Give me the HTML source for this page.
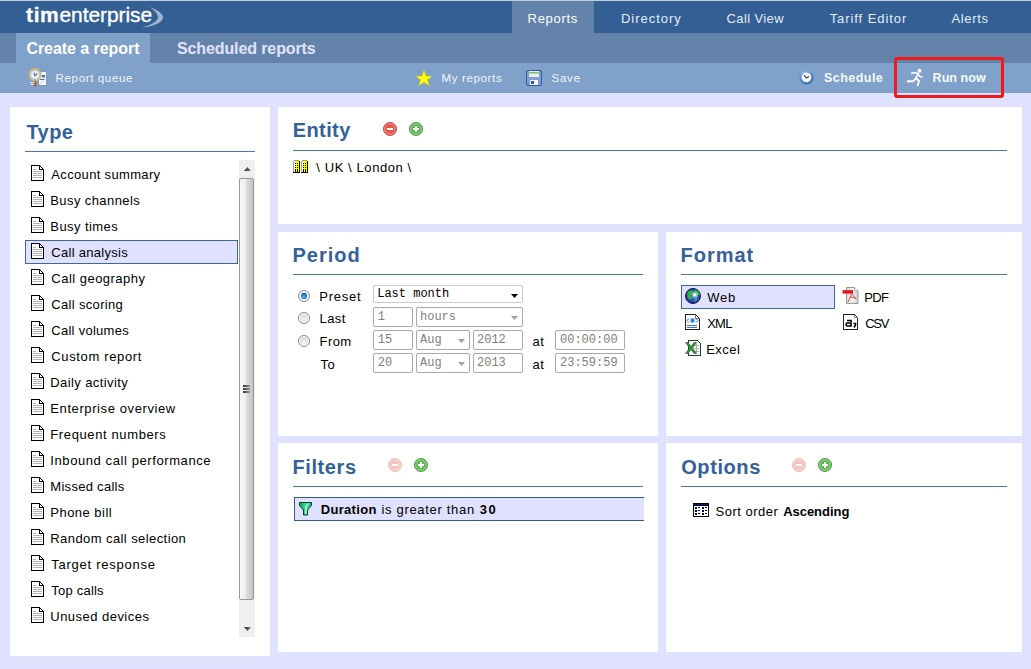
<!DOCTYPE html>
<html><head><meta charset="utf-8"><title>Create a report</title>
<style>
html,body{margin:0;padding:0;font-family:'Liberation Sans',sans-serif;width:1031px;height:669px;overflow:hidden;background:#e0e0ff;position:relative}
.a{position:absolute;box-sizing:content-box}
.t{position:absolute;white-space:pre}
.fld{border:1px solid #a9a9a9;border-radius:2px}
svg.a{display:block;overflow:visible}
</style></head><body>
<div class="a" style="left:0;top:0;width:1031px;height:1px;background:#c3cedb"></div><div class="a" style="left:0;top:1px;width:1031px;height:32px;background:#335f95"></div><div class="a" style="left:512px;top:1px;width:82px;height:32px;background:#6383ab"></div><div class="a" style="left:0;top:33px;width:1031px;height:30px;background:#6383ab"></div><div class="a" style="left:16px;top:33px;width:134px;height:30px;background:#7fa1ca"></div><div class="a" style="left:0;top:63px;width:1031px;height:30px;background:#7fa1ca"></div><svg class="a" style="left:138px;top:5px" width="28" height="26" viewBox="0 0 28 26"><path d="M12 2.2C20 5 25 9 25 12.3C25 17 17 21.5 4 22.6C13 20 20 16 20 12.5C20 9 17 5.5 12 2.2Z" fill="#a3b4d1"/></svg><div class="a" style="left:894px;top:57px;width:104px;height:35px;border:3px solid #f01818;border-radius:3px"></div><svg class="a" style="left:27px;top:67px" width="21" height="20" viewBox="0 0 21 20">
<rect x="11.5" y="4.5" width="8" height="14" fill="#f7f7f5" stroke="#7890b8" stroke-width="0.9"/>
<rect x="15" y="8" width="3" height="2.5" fill="#3a78d6"/><rect x="13" y="12" width="5" height="1" fill="#3a78d6"/>
<path d="M12 18L18 12" stroke="#b8b8b8" stroke-width="0.7"/>
<circle cx="8" cy="7.8" r="6" fill="#eef5fc" stroke="#d4b25e" stroke-width="1.5"/>
<circle cx="8" cy="7.8" r="4.6" fill="none" stroke="#7aa6e6" stroke-width="0.8"/>
<path d="M6.8 5.6L8 9L10.3 6.4" fill="none" stroke="#5a636e" stroke-width="1.1"/>
<path d="M8.5 14V18.5H6.5" fill="none" stroke="#cc4422" stroke-width="1.4"/>
<rect x="3.5" y="15" width="3" height="1" fill="#f4f4f4"/><rect x="3.5" y="17" width="3" height="1" fill="#f4f4f4"/>
</svg><svg class="a" style="left:415px;top:70px" width="18" height="17" viewBox="0 0 18 17"><path d="M9 0.5L11.1 6.2H17.2L12.3 9.8L14.2 15.8L9 12.1L3.8 15.8L5.7 9.8L0.8 6.2H6.9Z" fill="#ffff00" stroke="#e0d800" stroke-width="0.5"/></svg><svg class="a" style="left:526px;top:70px" width="16" height="16" viewBox="0 0 16 16">
<rect x="0.5" y="0.5" width="15" height="15" rx="1.5" fill="#7d9fd6" stroke="#2d5aa8"/>
<rect x="3" y="1" width="10" height="6" fill="#e8efe6"/><rect x="3" y="2" width="10" height="1.5" fill="#7cc168"/>
<rect x="4" y="10" width="8" height="5" fill="#f2f4f8"/><rect x="5" y="11" width="3" height="3" fill="#2d5aa8"/>
</svg><svg class="a" style="left:799px;top:70px" width="15" height="15" viewBox="0 0 15 15">
<defs><radialGradient id="sg" cx="0.4" cy="0.3" r="0.75"><stop offset="0" stop-color="#b8d4f4"/><stop offset="0.7" stop-color="#4a82c4"/><stop offset="1" stop-color="#2a5a98"/></radialGradient></defs>
<circle cx="7.5" cy="7.5" r="7" fill="url(#sg)"/>
<circle cx="7.5" cy="7.5" r="4.8" fill="#f8fbff"/>
<path d="M5 5.2L7.5 8L10 6.5" fill="none" stroke="#2a3a55" stroke-width="1.1"/>
</svg><svg class="a" style="left:905px;top:68px" width="20" height="19" viewBox="0 0 20 19">
<circle cx="14.5" cy="2.8" r="2" fill="#fff"/>
<path d="M6 5.5L9.5 4.5L13 5.5L11 10L14 13L12.5 18" fill="none" stroke="#fff" stroke-width="1.8" stroke-linejoin="round"/>
<path d="M13 5.5L14.5 8.5L17.5 9" fill="none" stroke="#fff" stroke-width="1.6" stroke-linejoin="round"/>
<path d="M11 10L8.5 13L2 13.5" fill="none" stroke="#fff" stroke-width="1.8" stroke-linejoin="round"/>
</svg><div class="a" style="left:10px;top:107px;width:260px;height:549px;background:#fff"></div><div class="a" style="left:278px;top:107px;width:744px;height:117px;background:#fff"></div><div class="a" style="left:278px;top:232px;width:380px;height:204px;background:#fff"></div><div class="a" style="left:666px;top:232px;width:356px;height:204px;background:#fff"></div><div class="a" style="left:278px;top:443px;width:380px;height:209px;background:#fff"></div><div class="a" style="left:666px;top:443px;width:356px;height:209px;background:#fff"></div><div class="a" style="left:25px;top:151px;width:230px;height:1px;background:#4f76a8"></div><div class="a" style="left:293px;top:150px;width:714px;height:1px;background:#4f76a8"></div><div class="a" style="left:293px;top:274px;width:350px;height:1px;background:#4f76a8"></div><div class="a" style="left:681px;top:274px;width:326px;height:1px;background:#4f76a8"></div><div class="a" style="left:293px;top:486px;width:350px;height:1px;background:#4f76a8"></div><div class="a" style="left:681px;top:486px;width:326px;height:1px;background:#4f76a8"></div><div class="a" style="left:239px;top:160px;width:16px;height:477px;background:#efefef"></div><svg class="a" style="left:244px;top:167px" width="7" height="4" viewBox="0 0 7 4"><defs><linearGradient id="ag" x1="0" x2="1"><stop offset="0" stop-color="#222"/><stop offset="1" stop-color="#888"/></linearGradient></defs><path d="M3.5 0L7 4H0Z" fill="url(#ag)"/></svg><svg class="a" style="left:244px;top:627px" width="7" height="4" viewBox="0 0 7 4"><path d="M0 0H7L3.5 4Z" fill="url(#ag)"/></svg><div class="a" style="left:239px;top:178px;width:13px;height:420px;border:1px solid #979797;border-radius:2px;background:linear-gradient(90deg,#f7f7f7 0%,#ececec 46%,#dcdcde 50%,#cacace 85%,#c2c2c6 100%)"></div><div class="a" style="left:243px;top:385px;width:7px;height:1.5px;background:linear-gradient(90deg,#333,#999)"></div><div class="a" style="left:243px;top:388px;width:7px;height:1.5px;background:linear-gradient(90deg,#333,#999)"></div><div class="a" style="left:243px;top:391px;width:7px;height:1.5px;background:linear-gradient(90deg,#333,#999)"></div><div class="a" style="left:25px;top:240px;width:211px;height:22px;border:1px solid #3c68a0;background:#e0e0ff"></div><svg class="a" style="left:31px;top:165px" width="13" height="16" viewBox="0 0 13 16" shape-rendering="crispEdges">
<path d="M0.5 0.5H8.5L12.5 4.5V15.5H0.5Z" fill="#fff" stroke="#000"/>
<path d="M8.5 0.5V4.5H12.5" fill="none" stroke="#000"/>
<rect x="2" y="4" width="3" height="1" fill="#b4b4b4"/>
<rect x="2" y="6" width="9" height="1" fill="#b4b4b4"/>
<rect x="2" y="8" width="9" height="1" fill="#b4b4b4"/>
<rect x="2" y="10" width="9" height="1" fill="#b4b4b4"/>
<rect x="2" y="12" width="9" height="1" fill="#b4b4b4"/>
</svg><svg class="a" style="left:31px;top:191px" width="13" height="16" viewBox="0 0 13 16" shape-rendering="crispEdges">
<path d="M0.5 0.5H8.5L12.5 4.5V15.5H0.5Z" fill="#fff" stroke="#000"/>
<path d="M8.5 0.5V4.5H12.5" fill="none" stroke="#000"/>
<rect x="2" y="4" width="3" height="1" fill="#b4b4b4"/>
<rect x="2" y="6" width="9" height="1" fill="#b4b4b4"/>
<rect x="2" y="8" width="9" height="1" fill="#b4b4b4"/>
<rect x="2" y="10" width="9" height="1" fill="#b4b4b4"/>
<rect x="2" y="12" width="9" height="1" fill="#b4b4b4"/>
</svg><svg class="a" style="left:31px;top:217px" width="13" height="16" viewBox="0 0 13 16" shape-rendering="crispEdges">
<path d="M0.5 0.5H8.5L12.5 4.5V15.5H0.5Z" fill="#fff" stroke="#000"/>
<path d="M8.5 0.5V4.5H12.5" fill="none" stroke="#000"/>
<rect x="2" y="4" width="3" height="1" fill="#b4b4b4"/>
<rect x="2" y="6" width="9" height="1" fill="#b4b4b4"/>
<rect x="2" y="8" width="9" height="1" fill="#b4b4b4"/>
<rect x="2" y="10" width="9" height="1" fill="#b4b4b4"/>
<rect x="2" y="12" width="9" height="1" fill="#b4b4b4"/>
</svg><svg class="a" style="left:31px;top:243px" width="13" height="16" viewBox="0 0 13 16" shape-rendering="crispEdges">
<path d="M0.5 0.5H8.5L12.5 4.5V15.5H0.5Z" fill="#fff" stroke="#000"/>
<path d="M8.5 0.5V4.5H12.5" fill="none" stroke="#000"/>
<rect x="2" y="4" width="3" height="1" fill="#b4b4b4"/>
<rect x="2" y="6" width="9" height="1" fill="#b4b4b4"/>
<rect x="2" y="8" width="9" height="1" fill="#b4b4b4"/>
<rect x="2" y="10" width="9" height="1" fill="#b4b4b4"/>
<rect x="2" y="12" width="9" height="1" fill="#b4b4b4"/>
</svg><svg class="a" style="left:31px;top:269px" width="13" height="16" viewBox="0 0 13 16" shape-rendering="crispEdges">
<path d="M0.5 0.5H8.5L12.5 4.5V15.5H0.5Z" fill="#fff" stroke="#000"/>
<path d="M8.5 0.5V4.5H12.5" fill="none" stroke="#000"/>
<rect x="2" y="4" width="3" height="1" fill="#b4b4b4"/>
<rect x="2" y="6" width="9" height="1" fill="#b4b4b4"/>
<rect x="2" y="8" width="9" height="1" fill="#b4b4b4"/>
<rect x="2" y="10" width="9" height="1" fill="#b4b4b4"/>
<rect x="2" y="12" width="9" height="1" fill="#b4b4b4"/>
</svg><svg class="a" style="left:31px;top:295px" width="13" height="16" viewBox="0 0 13 16" shape-rendering="crispEdges">
<path d="M0.5 0.5H8.5L12.5 4.5V15.5H0.5Z" fill="#fff" stroke="#000"/>
<path d="M8.5 0.5V4.5H12.5" fill="none" stroke="#000"/>
<rect x="2" y="4" width="3" height="1" fill="#b4b4b4"/>
<rect x="2" y="6" width="9" height="1" fill="#b4b4b4"/>
<rect x="2" y="8" width="9" height="1" fill="#b4b4b4"/>
<rect x="2" y="10" width="9" height="1" fill="#b4b4b4"/>
<rect x="2" y="12" width="9" height="1" fill="#b4b4b4"/>
</svg><svg class="a" style="left:31px;top:321px" width="13" height="16" viewBox="0 0 13 16" shape-rendering="crispEdges">
<path d="M0.5 0.5H8.5L12.5 4.5V15.5H0.5Z" fill="#fff" stroke="#000"/>
<path d="M8.5 0.5V4.5H12.5" fill="none" stroke="#000"/>
<rect x="2" y="4" width="3" height="1" fill="#b4b4b4"/>
<rect x="2" y="6" width="9" height="1" fill="#b4b4b4"/>
<rect x="2" y="8" width="9" height="1" fill="#b4b4b4"/>
<rect x="2" y="10" width="9" height="1" fill="#b4b4b4"/>
<rect x="2" y="12" width="9" height="1" fill="#b4b4b4"/>
</svg><svg class="a" style="left:31px;top:347px" width="13" height="16" viewBox="0 0 13 16" shape-rendering="crispEdges">
<path d="M0.5 0.5H8.5L12.5 4.5V15.5H0.5Z" fill="#fff" stroke="#000"/>
<path d="M8.5 0.5V4.5H12.5" fill="none" stroke="#000"/>
<rect x="2" y="4" width="3" height="1" fill="#b4b4b4"/>
<rect x="2" y="6" width="9" height="1" fill="#b4b4b4"/>
<rect x="2" y="8" width="9" height="1" fill="#b4b4b4"/>
<rect x="2" y="10" width="9" height="1" fill="#b4b4b4"/>
<rect x="2" y="12" width="9" height="1" fill="#b4b4b4"/>
</svg><svg class="a" style="left:31px;top:373px" width="13" height="16" viewBox="0 0 13 16" shape-rendering="crispEdges">
<path d="M0.5 0.5H8.5L12.5 4.5V15.5H0.5Z" fill="#fff" stroke="#000"/>
<path d="M8.5 0.5V4.5H12.5" fill="none" stroke="#000"/>
<rect x="2" y="4" width="3" height="1" fill="#b4b4b4"/>
<rect x="2" y="6" width="9" height="1" fill="#b4b4b4"/>
<rect x="2" y="8" width="9" height="1" fill="#b4b4b4"/>
<rect x="2" y="10" width="9" height="1" fill="#b4b4b4"/>
<rect x="2" y="12" width="9" height="1" fill="#b4b4b4"/>
</svg><svg class="a" style="left:31px;top:399px" width="13" height="16" viewBox="0 0 13 16" shape-rendering="crispEdges">
<path d="M0.5 0.5H8.5L12.5 4.5V15.5H0.5Z" fill="#fff" stroke="#000"/>
<path d="M8.5 0.5V4.5H12.5" fill="none" stroke="#000"/>
<rect x="2" y="4" width="3" height="1" fill="#b4b4b4"/>
<rect x="2" y="6" width="9" height="1" fill="#b4b4b4"/>
<rect x="2" y="8" width="9" height="1" fill="#b4b4b4"/>
<rect x="2" y="10" width="9" height="1" fill="#b4b4b4"/>
<rect x="2" y="12" width="9" height="1" fill="#b4b4b4"/>
</svg><svg class="a" style="left:31px;top:425px" width="13" height="16" viewBox="0 0 13 16" shape-rendering="crispEdges">
<path d="M0.5 0.5H8.5L12.5 4.5V15.5H0.5Z" fill="#fff" stroke="#000"/>
<path d="M8.5 0.5V4.5H12.5" fill="none" stroke="#000"/>
<rect x="2" y="4" width="3" height="1" fill="#b4b4b4"/>
<rect x="2" y="6" width="9" height="1" fill="#b4b4b4"/>
<rect x="2" y="8" width="9" height="1" fill="#b4b4b4"/>
<rect x="2" y="10" width="9" height="1" fill="#b4b4b4"/>
<rect x="2" y="12" width="9" height="1" fill="#b4b4b4"/>
</svg><svg class="a" style="left:31px;top:451px" width="13" height="16" viewBox="0 0 13 16" shape-rendering="crispEdges">
<path d="M0.5 0.5H8.5L12.5 4.5V15.5H0.5Z" fill="#fff" stroke="#000"/>
<path d="M8.5 0.5V4.5H12.5" fill="none" stroke="#000"/>
<rect x="2" y="4" width="3" height="1" fill="#b4b4b4"/>
<rect x="2" y="6" width="9" height="1" fill="#b4b4b4"/>
<rect x="2" y="8" width="9" height="1" fill="#b4b4b4"/>
<rect x="2" y="10" width="9" height="1" fill="#b4b4b4"/>
<rect x="2" y="12" width="9" height="1" fill="#b4b4b4"/>
</svg><svg class="a" style="left:31px;top:477px" width="13" height="16" viewBox="0 0 13 16" shape-rendering="crispEdges">
<path d="M0.5 0.5H8.5L12.5 4.5V15.5H0.5Z" fill="#fff" stroke="#000"/>
<path d="M8.5 0.5V4.5H12.5" fill="none" stroke="#000"/>
<rect x="2" y="4" width="3" height="1" fill="#b4b4b4"/>
<rect x="2" y="6" width="9" height="1" fill="#b4b4b4"/>
<rect x="2" y="8" width="9" height="1" fill="#b4b4b4"/>
<rect x="2" y="10" width="9" height="1" fill="#b4b4b4"/>
<rect x="2" y="12" width="9" height="1" fill="#b4b4b4"/>
</svg><svg class="a" style="left:31px;top:503px" width="13" height="16" viewBox="0 0 13 16" shape-rendering="crispEdges">
<path d="M0.5 0.5H8.5L12.5 4.5V15.5H0.5Z" fill="#fff" stroke="#000"/>
<path d="M8.5 0.5V4.5H12.5" fill="none" stroke="#000"/>
<rect x="2" y="4" width="3" height="1" fill="#b4b4b4"/>
<rect x="2" y="6" width="9" height="1" fill="#b4b4b4"/>
<rect x="2" y="8" width="9" height="1" fill="#b4b4b4"/>
<rect x="2" y="10" width="9" height="1" fill="#b4b4b4"/>
<rect x="2" y="12" width="9" height="1" fill="#b4b4b4"/>
</svg><svg class="a" style="left:31px;top:529px" width="13" height="16" viewBox="0 0 13 16" shape-rendering="crispEdges">
<path d="M0.5 0.5H8.5L12.5 4.5V15.5H0.5Z" fill="#fff" stroke="#000"/>
<path d="M8.5 0.5V4.5H12.5" fill="none" stroke="#000"/>
<rect x="2" y="4" width="3" height="1" fill="#b4b4b4"/>
<rect x="2" y="6" width="9" height="1" fill="#b4b4b4"/>
<rect x="2" y="8" width="9" height="1" fill="#b4b4b4"/>
<rect x="2" y="10" width="9" height="1" fill="#b4b4b4"/>
<rect x="2" y="12" width="9" height="1" fill="#b4b4b4"/>
</svg><svg class="a" style="left:31px;top:555px" width="13" height="16" viewBox="0 0 13 16" shape-rendering="crispEdges">
<path d="M0.5 0.5H8.5L12.5 4.5V15.5H0.5Z" fill="#fff" stroke="#000"/>
<path d="M8.5 0.5V4.5H12.5" fill="none" stroke="#000"/>
<rect x="2" y="4" width="3" height="1" fill="#b4b4b4"/>
<rect x="2" y="6" width="9" height="1" fill="#b4b4b4"/>
<rect x="2" y="8" width="9" height="1" fill="#b4b4b4"/>
<rect x="2" y="10" width="9" height="1" fill="#b4b4b4"/>
<rect x="2" y="12" width="9" height="1" fill="#b4b4b4"/>
</svg><svg class="a" style="left:31px;top:581px" width="13" height="16" viewBox="0 0 13 16" shape-rendering="crispEdges">
<path d="M0.5 0.5H8.5L12.5 4.5V15.5H0.5Z" fill="#fff" stroke="#000"/>
<path d="M8.5 0.5V4.5H12.5" fill="none" stroke="#000"/>
<rect x="2" y="4" width="3" height="1" fill="#b4b4b4"/>
<rect x="2" y="6" width="9" height="1" fill="#b4b4b4"/>
<rect x="2" y="8" width="9" height="1" fill="#b4b4b4"/>
<rect x="2" y="10" width="9" height="1" fill="#b4b4b4"/>
<rect x="2" y="12" width="9" height="1" fill="#b4b4b4"/>
</svg><svg class="a" style="left:31px;top:607px" width="13" height="16" viewBox="0 0 13 16" shape-rendering="crispEdges">
<path d="M0.5 0.5H8.5L12.5 4.5V15.5H0.5Z" fill="#fff" stroke="#000"/>
<path d="M8.5 0.5V4.5H12.5" fill="none" stroke="#000"/>
<rect x="2" y="4" width="3" height="1" fill="#b4b4b4"/>
<rect x="2" y="6" width="9" height="1" fill="#b4b4b4"/>
<rect x="2" y="8" width="9" height="1" fill="#b4b4b4"/>
<rect x="2" y="10" width="9" height="1" fill="#b4b4b4"/>
<rect x="2" y="12" width="9" height="1" fill="#b4b4b4"/>
</svg><svg class="a" style="left:383px;top:122px" width="14" height="14" viewBox="0 0 14 14">
<circle cx="7" cy="7" r="6.5" fill="#e5574b" stroke="#d0483e"/>
<circle cx="7" cy="7" r="5.3" fill="none" stroke="#f3a29a" stroke-width="0.8"/>
<rect x="4" y="6" width="6" height="2" fill="#fff"/>
</svg><svg class="a" style="left:409px;top:122px" width="14" height="14" viewBox="0 0 14 14">
<circle cx="7" cy="7" r="6.5" fill="#62b655" stroke="#4b9a45"/>
<circle cx="7" cy="7" r="5.3" fill="none" stroke="#a9dba0" stroke-width="0.8"/>
<rect x="4" y="6" width="6" height="2" fill="#fff"/>
<rect x="6" y="4" width="2" height="6" fill="#fff"/>
</svg><svg class="a" style="left:293px;top:160px" width="15" height="13" viewBox="0 0 15 13" shape-rendering="crispEdges"><rect x="0" y="1" width="7" height="12" fill="#000"/><rect x="1" y="0" width="5" height="1" fill="#9a9a9a"/><rect x="0" y="1" width="1" height="11" fill="#a0a0a0"/><rect x="1" y="1" width="5" height="11" fill="#ffff00"/><rect x="1" y="1" width="1" height="11" fill="#ffffff"/><rect x="2" y="3" width="1" height="1" fill="#000"/><rect x="4" y="3" width="1" height="1" fill="#000"/><rect x="2" y="5" width="1" height="1" fill="#000"/><rect x="4" y="5" width="1" height="1" fill="#000"/><rect x="2" y="7" width="1" height="1" fill="#000"/><rect x="4" y="7" width="1" height="1" fill="#000"/><rect x="2" y="9" width="1" height="3" fill="#000"/><rect x="4" y="9" width="1" height="3" fill="#000"/><rect x="8" y="1" width="7" height="12" fill="#000"/><rect x="9" y="0" width="5" height="1" fill="#9a9a9a"/><rect x="8" y="1" width="1" height="11" fill="#a0a0a0"/><rect x="9" y="1" width="5" height="11" fill="#ffff00"/><rect x="9" y="1" width="1" height="11" fill="#ffffff"/><rect x="10" y="3" width="1" height="1" fill="#000"/><rect x="12" y="3" width="1" height="1" fill="#000"/><rect x="10" y="5" width="1" height="1" fill="#000"/><rect x="12" y="5" width="1" height="1" fill="#000"/><rect x="10" y="7" width="1" height="1" fill="#000"/><rect x="12" y="7" width="1" height="1" fill="#000"/><rect x="10" y="9" width="1" height="3" fill="#000"/><rect x="12" y="9" width="1" height="3" fill="#000"/></svg><svg class="a" style="left:298px;top:290px" width="12" height="12" viewBox="0 0 12 12">
<defs><radialGradient id="rg298290" cx="0.5" cy="0.7" r="0.6"><stop offset="0" stop-color="#f4f5f7"/><stop offset="1" stop-color="#d4d7dc"/></radialGradient></defs>
<circle cx="6" cy="6" r="5.5" fill="url(#rg298290)" stroke="#8a8a8a"/>
<circle cx="6" cy="6" r="4.5" fill="none" stroke="#fff" stroke-width="0.8"/>
<defs><radialGradient id="rd" cx="0.45" cy="0.6" r="0.6"><stop offset="0" stop-color="#5cc8ff"/><stop offset="0.6" stop-color="#1a88d0"/><stop offset="1" stop-color="#0a3d6e"/></radialGradient></defs><circle cx="6" cy="6" r="2.9" fill="url(#rd)"/>
</svg><svg class="a" style="left:298px;top:312px" width="12" height="12" viewBox="0 0 12 12">
<defs><radialGradient id="rg298312" cx="0.5" cy="0.7" r="0.6"><stop offset="0" stop-color="#f4f5f7"/><stop offset="1" stop-color="#d4d7dc"/></radialGradient></defs>
<circle cx="6" cy="6" r="5.5" fill="url(#rg298312)" stroke="#8a8a8a"/>
<circle cx="6" cy="6" r="4.5" fill="none" stroke="#fff" stroke-width="0.8"/>

</svg><svg class="a" style="left:298px;top:335px" width="12" height="12" viewBox="0 0 12 12">
<defs><radialGradient id="rg298335" cx="0.5" cy="0.7" r="0.6"><stop offset="0" stop-color="#f4f5f7"/><stop offset="1" stop-color="#d4d7dc"/></radialGradient></defs>
<circle cx="6" cy="6" r="5.5" fill="url(#rg298335)" stroke="#8a8a8a"/>
<circle cx="6" cy="6" r="4.5" fill="none" stroke="#fff" stroke-width="0.8"/>

</svg><div class="a fld" style="left:373px;top:285px;width:148px;height:16px;border-color:#c9ccd6;background:#fff"></div><svg class="a" style="left:510.70000000000005px;top:294px" width="7" height="4" viewBox="0 0 7 4"><path d="M0 0H7L3.5 4Z" fill="#000"/></svg><div class="a fld" style="left:373px;top:307px;width:38px;height:18px;border-color:#a9a9a9;background:#fff"></div><div class="a fld" style="left:416px;top:307px;width:105px;height:18px;border-color:#a9a9a9;background:#fff"></div><svg class="a" style="left:510.70000000000005px;top:316px" width="7" height="4" viewBox="0 0 7 4"><path d="M0 0H7L3.5 4Z" fill="#a0a0a0"/></svg><div class="a fld" style="left:373px;top:330px;width:38px;height:18px;border-color:#a9a9a9;background:#fff"></div><div class="a fld" style="left:416px;top:330px;width:52px;height:18px;border-color:#a9a9a9;background:#fff"></div><svg class="a" style="left:458.0px;top:339px" width="7" height="4" viewBox="0 0 7 4"><path d="M0 0H7L3.5 4Z" fill="#a0a0a0"/></svg><div class="a fld" style="left:473px;top:330px;width:48px;height:18px;border-color:#a9a9a9;background:#fff"></div><div class="a fld" style="left:373px;top:353px;width:38px;height:18px;border-color:#a9a9a9;background:#fff"></div><div class="a fld" style="left:416px;top:353px;width:52px;height:18px;border-color:#a9a9a9;background:#fff"></div><svg class="a" style="left:458.0px;top:362px" width="7" height="4" viewBox="0 0 7 4"><path d="M0 0H7L3.5 4Z" fill="#a0a0a0"/></svg><div class="a fld" style="left:473px;top:353px;width:48px;height:18px;border-color:#a9a9a9;background:#fff"></div><div class="a fld" style="left:555px;top:330px;width:68px;height:18px;border-color:#a9a9a9;background:#fff"></div><div class="a fld" style="left:555px;top:353px;width:68px;height:18px;border-color:#a9a9a9;background:#fff"></div><div class="a" style="left:681px;top:285px;width:152px;height:22px;border:1px solid #3c68a0;background:#e0e0ff"></div><svg class="a" style="left:685px;top:288px" width="16" height="16" viewBox="0 0 16 16">
<defs><radialGradient id="gl" cx="0.55" cy="0.45" r="0.6"><stop offset="0" stop-color="#5a7cff"/><stop offset="1" stop-color="#1428a8"/></radialGradient></defs>
<circle cx="8" cy="8" r="7.5" fill="url(#gl)" stroke="#0a0a30" stroke-width="0.9"/>
<path d="M3 3.5C5 2 7.5 2 8 3.5C8.5 5 6.5 5.5 6 7C5.5 8.5 7 9.5 6.5 11C6 12.5 4 11.5 3 10C2 8.5 2 5 3 3.5Z" fill="#2fb82f"/>
<path d="M10 1.5C12.5 2 14.5 4 15 6.5C14 7 12.5 6.5 12 8C11.5 9.5 12.5 11 11.5 13C10.5 14 9.5 14 9.5 12.5C9.5 11 11 10 10.5 8.5C10 7 9 6 10 1.5Z" fill="#2fb82f"/>
<circle cx="9.8" cy="6.8" r="1.8" fill="#ffffff" opacity="0.95"/>
<circle cx="9.8" cy="6.8" r="3.2" fill="#ffffff" opacity="0.3"/>
</svg><svg class="a" style="left:685px;top:314px" width="15" height="16" viewBox="0 0 15 16" shape-rendering="crispEdges">
<path d="M0.5 0.5H10.5L14.5 4.5V15.5H0.5Z" fill="#fff" stroke="#222"/>
<path d="M10.5 0.5V4.5H14.5" fill="none" stroke="#777"/>
<rect x="2" y="11" width="10" height="1" fill="#3a6ad8"/><rect x="2" y="13" width="10" height="1" fill="#3a6ad8"/>
<circle cx="7.5" cy="6.5" r="2.2" fill="#1e8ae6" shape-rendering="auto"/>
<path d="M4 4.5L2 6.5L4 8.5M11 4.5L13 6.5L11 8.5" fill="none" stroke="#2a5ad8" stroke-width="1" shape-rendering="auto"/>
</svg><svg class="a" style="left:685px;top:340px" width="16" height="16" viewBox="0 0 16 16" shape-rendering="crispEdges">
<path d="M3.5 0.5H12.5L15.5 3.5V15.5H3.5Z" fill="#f6f6f6" stroke="#333"/>
<rect x="9" y="5" width="5" height="1" fill="#aaa"/><rect x="9" y="8" width="5" height="1" fill="#aaa"/><rect x="9" y="11" width="5" height="1" fill="#aaa"/>
<rect x="11" y="4" width="1" height="9" fill="#aaa"/>
<path d="M0.5 2.5L3 2.5L6 6.5L9 2.5L11.5 2.5L7.5 8L11.5 13.5L9 13.5L6 9.5L3 13.5L0.5 13.5L4.5 8Z" fill="#2f8f3a" stroke="#1c6a26" stroke-width="0.6" shape-rendering="auto"/>
</svg><svg class="a" style="left:842px;top:287px" width="17" height="17" viewBox="0 0 17 17">
<defs><linearGradient id="pg" x1="0" x2="1"><stop offset="0" stop-color="#d8d8d8"/><stop offset="0.5" stop-color="#f4f4f4"/><stop offset="1" stop-color="#d0d0d0"/></linearGradient>
<linearGradient id="pr" x1="0" y1="0" x2="0" y2="1"><stop offset="0" stop-color="#ff3030"/><stop offset="1" stop-color="#c00000"/></linearGradient></defs>
<path d="M4.5 0.5H12.5L16 4V16.5H4.5Z" fill="url(#pg)" stroke="#9a9a9a"/>
<path d="M12.5 0.5V4H16" fill="#fff" stroke="#aaa"/>
<rect x="0.5" y="3" width="10.5" height="3.5" fill="url(#pr)"/>
<path d="M6 15C7.5 12 9 9 10 5.5M8 10.5C10 10 12.5 10.5 14.5 12M10 6C10.5 8 12 10 14 11.5" fill="none" stroke="#e04040" stroke-width="0.9"/>
</svg><svg class="a" style="left:843px;top:314px" width="15" height="16" viewBox="0 0 15 16" shape-rendering="crispEdges">
<path d="M0.5 0.5H11.5L14.5 3.5V15.5H0.5Z" fill="#fff" stroke="#222"/>
<path d="M11.5 0.5V3.5H14.5" fill="none" stroke="#999"/>
<path d="M4 6.5H8V12H4.5C3.5 12 3 11.4 3 10.6C3 9.6 3.6 9 4.6 9H7" fill="none" stroke="#000" stroke-width="1.6" shape-rendering="auto"/>
<path d="M10.5 9.5H12.5V11L11 13.5" fill="none" stroke="#000" stroke-width="1.5" shape-rendering="auto"/>
</svg><svg class="a" style="left:388px;top:458px" width="14" height="14" viewBox="0 0 14 14" opacity="0.35">
<circle cx="7" cy="7" r="6.5" fill="#e5574b" stroke="#d0483e"/>
<circle cx="7" cy="7" r="5.3" fill="none" stroke="#f3a29a" stroke-width="0.8"/>
<rect x="4" y="6" width="6" height="2" fill="#fff"/>
</svg><svg class="a" style="left:414px;top:458px" width="14" height="14" viewBox="0 0 14 14">
<circle cx="7" cy="7" r="6.5" fill="#62b655" stroke="#4b9a45"/>
<circle cx="7" cy="7" r="5.3" fill="none" stroke="#a9dba0" stroke-width="0.8"/>
<rect x="4" y="6" width="6" height="2" fill="#fff"/>
<rect x="6" y="4" width="2" height="6" fill="#fff"/>
</svg><div class="a" style="left:294px;top:497px;width:349px;height:22px;border-top:1px solid #2f5b92;border-bottom:1px solid #2f5b92;border-left:1px solid #2f5b92;background:#e0e0ff"></div><svg class="a" style="left:298px;top:501px" width="15" height="15" viewBox="0 0 15 15">
<defs><linearGradient id="fg" x1="0" x2="1"><stop offset="0" stop-color="#12a058"/><stop offset="0.6" stop-color="#3de0a0"/><stop offset="1" stop-color="#18b070"/></linearGradient></defs>
<path d="M1.5 1.5H13.5V4.5L9.5 9V14H5.5V9L1.5 4.5Z" fill="url(#fg)" stroke="#073e1c" stroke-width="1"/>
<path d="M10.5 2.5L8 5.5V13" fill="none" stroke="#ffffff" stroke-width="1"/>
</svg><svg class="a" style="left:792px;top:458px" width="14" height="14" viewBox="0 0 14 14" opacity="0.35">
<circle cx="7" cy="7" r="6.5" fill="#e5574b" stroke="#d0483e"/>
<circle cx="7" cy="7" r="5.3" fill="none" stroke="#f3a29a" stroke-width="0.8"/>
<rect x="4" y="6" width="6" height="2" fill="#fff"/>
</svg><svg class="a" style="left:818px;top:458px" width="14" height="14" viewBox="0 0 14 14">
<circle cx="7" cy="7" r="6.5" fill="#62b655" stroke="#4b9a45"/>
<circle cx="7" cy="7" r="5.3" fill="none" stroke="#a9dba0" stroke-width="0.8"/>
<rect x="4" y="6" width="6" height="2" fill="#fff"/>
<rect x="6" y="4" width="2" height="6" fill="#fff"/>
</svg><svg class="a" style="left:693px;top:503px" width="16" height="14" viewBox="0 0 16 14" shape-rendering="crispEdges">
<rect x="0.5" y="0.5" width="15" height="13" fill="#fff" stroke="#000"/>
<rect x="1" y="1" width="14" height="1" fill="#002080"/><rect x="1" y="2" width="14" height="1" fill="#000"/>
<rect x="2" y="4" width="2" height="2" fill="#00008a"/><rect x="5" y="4" width="2" height="1" fill="#000"/><rect x="9" y="4" width="2" height="2" fill="#00008a"/><rect x="12" y="4" width="2" height="1" fill="#000"/><rect x="2" y="7" width="2" height="2" fill="#00008a"/><rect x="5" y="7" width="2" height="1" fill="#000"/><rect x="9" y="7" width="2" height="2" fill="#00008a"/><rect x="12" y="7" width="2" height="1" fill="#000"/><rect x="2" y="10" width="2" height="2" fill="#00008a"/><rect x="5" y="10" width="2" height="1" fill="#000"/><rect x="9" y="10" width="2" height="2" fill="#00008a"/><rect x="12" y="10" width="2" height="1" fill="#000"/>
</svg>
<div class="t" style="left:527.60px;top:12.04px;font:400 13px/14.521px 'Liberation Sans', sans-serif;color:#ffffff;letter-spacing:0.680px">Reports</div>
<div class="t" style="left:621.00px;top:12.04px;font:400 13px/14.521px 'Liberation Sans', sans-serif;color:#e4ebf5;letter-spacing:0.974px">Directory</div>
<div class="t" style="left:726.60px;top:12.04px;font:400 13px/14.521px 'Liberation Sans', sans-serif;color:#e4ebf5;letter-spacing:0.380px">Call View</div>
<div class="t" style="left:829.70px;top:12.04px;font:400 13px/14.521px 'Liberation Sans', sans-serif;color:#e4ebf5;letter-spacing:0.918px">Tariff Editor</div>
<div class="t" style="left:951.50px;top:12.04px;font:400 13px/14.521px 'Liberation Sans', sans-serif;color:#e4ebf5;letter-spacing:0.634px">Alerts</div>
<div class="t" style="left:26.40px;top:40.12px;font:700 16px/17.872px 'Liberation Sans', sans-serif;color:#ffffff;letter-spacing:-0.049px">Create a report</div>
<div class="t" style="left:177.00px;top:40.12px;font:700 16px/17.872px 'Liberation Sans', sans-serif;color:#e2e2fc;letter-spacing:-0.111px">Scheduled reports</div>
<div class="t" style="left:55.60px;top:71.59px;font:400 11.5px/12.845px 'Liberation Sans', sans-serif;color:#f2f5fa;letter-spacing:0.646px">Report queue</div>
<div class="t" style="left:441.40px;top:71.59px;font:400 11.5px/12.845px 'Liberation Sans', sans-serif;color:#f2f5fa;letter-spacing:0.670px">My reports</div>
<div class="t" style="left:551.40px;top:71.59px;font:400 11.5px/12.845px 'Liberation Sans', sans-serif;color:#f2f5fa;letter-spacing:0.828px">Save</div>
<div class="t" style="left:824.10px;top:72.09px;font:700 12.5px/13.963px 'Liberation Sans', sans-serif;color:#f7f9fc;letter-spacing:0.440px">Schedule</div>
<div class="t" style="left:932.60px;top:72.09px;font:700 12.5px/13.963px 'Liberation Sans', sans-serif;color:#f7f9fc;letter-spacing:0.043px">Run now</div>
<div class="t" style="-webkit-text-stroke:0.35px #fff;left:26.10px;top:3.30px;font:700 21px/23.457px 'Liberation Sans', sans-serif;color:#ffffff;letter-spacing:0.586px">tim</div>
<div class="t" style="-webkit-text-stroke:0.35px #fff;left:59.50px;top:3.30px;font:400 21px/23.457px 'Liberation Sans', sans-serif;color:#ffffff;letter-spacing:-0.078px">enterprise</div>
<div class="t" style="left:26.40px;top:120.80px;font:700 20px/22.340px 'Liberation Sans', sans-serif;color:#34619a;letter-spacing:0.443px">Type</div>
<div class="t" style="left:292.70px;top:118.80px;font:700 20px/22.340px 'Liberation Sans', sans-serif;color:#34619a;letter-spacing:0.413px">Entity</div>
<div class="t" style="left:292.40px;top:243.80px;font:700 20px/22.340px 'Liberation Sans', sans-serif;color:#34619a;letter-spacing:1.016px">Period</div>
<div class="t" style="left:680.50px;top:243.70px;font:700 20px/22.340px 'Liberation Sans', sans-serif;color:#34619a;letter-spacing:0.975px">Format</div>
<div class="t" style="left:292.50px;top:455.90px;font:700 20px/22.340px 'Liberation Sans', sans-serif;color:#34619a;letter-spacing:0.584px">Filters</div>
<div class="t" style="left:681.20px;top:455.90px;font:700 20px/22.340px 'Liberation Sans', sans-serif;color:#34619a;letter-spacing:0.596px">Options</div>
<div class="t" style="left:51.30px;top:168.13px;font:400 13px/14.521px 'Liberation Sans', sans-serif;color:#000;letter-spacing:0.341px">Account summary</div>
<div class="t" style="left:50.30px;top:194.13px;font:400 13px/14.521px 'Liberation Sans', sans-serif;color:#000;letter-spacing:0.404px">Busy channels</div>
<div class="t" style="left:50.30px;top:220.13px;font:400 13px/14.521px 'Liberation Sans', sans-serif;color:#000;letter-spacing:0.425px">Busy times</div>
<div class="t" style="left:51.30px;top:246.13px;font:400 13px/14.521px 'Liberation Sans', sans-serif;color:#000;letter-spacing:0.294px">Call analysis</div>
<div class="t" style="left:51.30px;top:272.13px;font:400 13px/14.521px 'Liberation Sans', sans-serif;color:#000;letter-spacing:0.481px">Call geography</div>
<div class="t" style="left:51.30px;top:298.13px;font:400 13px/14.521px 'Liberation Sans', sans-serif;color:#000;letter-spacing:0.329px">Call scoring</div>
<div class="t" style="left:51.30px;top:324.13px;font:400 13px/14.521px 'Liberation Sans', sans-serif;color:#000;letter-spacing:0.271px">Call volumes</div>
<div class="t" style="left:51.30px;top:350.13px;font:400 13px/14.521px 'Liberation Sans', sans-serif;color:#000;letter-spacing:0.646px">Custom report</div>
<div class="t" style="left:50.30px;top:376.13px;font:400 13px/14.521px 'Liberation Sans', sans-serif;color:#000;letter-spacing:0.405px">Daily activity</div>
<div class="t" style="left:50.30px;top:402.13px;font:400 13px/14.521px 'Liberation Sans', sans-serif;color:#000;letter-spacing:0.596px">Enterprise overview</div>
<div class="t" style="left:50.30px;top:428.13px;font:400 13px/14.521px 'Liberation Sans', sans-serif;color:#000;letter-spacing:0.619px">Frequent numbers</div>
<div class="t" style="left:50.30px;top:454.13px;font:400 13px/14.521px 'Liberation Sans', sans-serif;color:#000;letter-spacing:0.588px">Inbound call performance</div>
<div class="t" style="left:50.30px;top:480.13px;font:400 13px/14.521px 'Liberation Sans', sans-serif;color:#000;letter-spacing:0.291px">Missed calls</div>
<div class="t" style="left:50.30px;top:506.13px;font:400 13px/14.521px 'Liberation Sans', sans-serif;color:#000;letter-spacing:0.477px">Phone bill</div>
<div class="t" style="left:50.30px;top:532.13px;font:400 13px/14.521px 'Liberation Sans', sans-serif;color:#000;letter-spacing:0.418px">Random call selection</div>
<div class="t" style="left:51.30px;top:558.13px;font:400 13px/14.521px 'Liberation Sans', sans-serif;color:#000;letter-spacing:0.743px">Target response</div>
<div class="t" style="left:51.30px;top:584.13px;font:400 13px/14.521px 'Liberation Sans', sans-serif;color:#000;letter-spacing:0.215px">Top calls</div>
<div class="t" style="left:50.30px;top:610.13px;font:400 13px/14.521px 'Liberation Sans', sans-serif;color:#000;letter-spacing:0.469px">Unused devices</div>
<div class="t" style="left:316.30px;top:161.04px;font:400 13px/14.521px 'Liberation Sans', sans-serif;color:#000;letter-spacing:0.585px">\ UK \ London \</div>
<div class="t" style="left:319.20px;top:290.44px;font:400 13px/14.521px 'Liberation Sans', sans-serif;color:#000;letter-spacing:0.768px">Preset</div>
<div class="t" style="left:319.50px;top:311.94px;font:400 13px/14.521px 'Liberation Sans', sans-serif;color:#000;letter-spacing:0.450px">Last</div>
<div class="t" style="left:319.50px;top:335.04px;font:400 13px/14.521px 'Liberation Sans', sans-serif;color:#000;letter-spacing:0.450px">From</div>
<div class="t" style="left:320.50px;top:358.04px;font:400 13px/14.521px 'Liberation Sans', sans-serif;color:#000;letter-spacing:0.450px">To</div>
<div class="t" style="left:532.60px;top:334.94px;font:400 13px/14.521px 'Liberation Sans', sans-serif;color:#000;letter-spacing:0.450px">at</div>
<div class="t" style="left:532.60px;top:357.94px;font:400 13px/14.521px 'Liberation Sans', sans-serif;color:#000;letter-spacing:0.450px">at</div>
<div class="t" style="left:377.20px;top:288.14px;font:400 12px/13.404px 'Liberation Mono', monospace;color:#000;letter-spacing:0.000px">Last month</div>
<div class="t" style="left:377.70px;top:311.14px;font:400 12px/13.404px 'Liberation Mono', monospace;color:#808080;letter-spacing:0.000px">1</div>
<div class="t" style="left:420.00px;top:311.14px;font:400 12px/13.404px 'Liberation Mono', monospace;color:#808080;letter-spacing:0.000px">hours</div>
<div class="t" style="left:377.70px;top:334.14px;font:400 12px/13.404px 'Liberation Mono', monospace;color:#808080;letter-spacing:0.000px">15</div>
<div class="t" style="left:420.00px;top:334.14px;font:400 12px/13.404px 'Liberation Mono', monospace;color:#808080;letter-spacing:0.000px">Aug</div>
<div class="t" style="left:477.00px;top:334.14px;font:400 12px/13.404px 'Liberation Mono', monospace;color:#808080;letter-spacing:0.000px">2012</div>
<div class="t" style="left:377.70px;top:357.14px;font:400 12px/13.404px 'Liberation Mono', monospace;color:#808080;letter-spacing:0.000px">20</div>
<div class="t" style="left:420.00px;top:357.14px;font:400 12px/13.404px 'Liberation Mono', monospace;color:#808080;letter-spacing:0.000px">Aug</div>
<div class="t" style="left:477.00px;top:357.14px;font:400 12px/13.404px 'Liberation Mono', monospace;color:#808080;letter-spacing:0.000px">2013</div>
<div class="t" style="left:560.00px;top:334.14px;font:400 12px/13.404px 'Liberation Mono', monospace;color:#808080;letter-spacing:0.000px">00:00:00</div>
<div class="t" style="left:560.00px;top:357.14px;font:400 12px/13.404px 'Liberation Mono', monospace;color:#808080;letter-spacing:0.000px">23:59:59</div>
<div class="t" style="left:707.20px;top:290.74px;font:400 13px/14.521px 'Liberation Sans', sans-serif;color:#000;letter-spacing:0.817px">Web</div>
<div class="t" style="left:707.20px;top:316.74px;font:400 13px/14.521px 'Liberation Sans', sans-serif;color:#000;letter-spacing:-0.750px">XML</div>
<div class="t" style="left:706.20px;top:342.74px;font:400 13px/14.521px 'Liberation Sans', sans-serif;color:#000;letter-spacing:0.450px">Excel</div>
<div class="t" style="left:864.20px;top:290.74px;font:400 13px/14.521px 'Liberation Sans', sans-serif;color:#000;letter-spacing:-0.630px">PDF</div>
<div class="t" style="left:865.20px;top:316.74px;font:400 13px/14.521px 'Liberation Sans', sans-serif;color:#000;letter-spacing:-1.280px">CSV</div>
<div class="t" style="left:320.70px;top:502.94px;font:700 13px/14.521px 'Liberation Sans', sans-serif;color:#000;letter-spacing:0.329px">Duration</div>
<div class="t" style="left:381.50px;top:502.94px;font:400 13px/14.521px 'Liberation Sans', sans-serif;color:#000;letter-spacing:0.680px">is greater than</div>
<div class="t" style="left:479.70px;top:502.94px;font:700 13px/14.521px 'Liberation Sans', sans-serif;color:#000;letter-spacing:1.670px">30</div>
<div class="t" style="left:715.50px;top:504.53px;font:400 13px/14.521px 'Liberation Sans', sans-serif;color:#000;letter-spacing:0.492px">Sort order</div>
<div class="t" style="left:783.20px;top:504.53px;font:700 13px/14.521px 'Liberation Sans', sans-serif;color:#000;letter-spacing:-0.039px">Ascending</div>
</body></html>
